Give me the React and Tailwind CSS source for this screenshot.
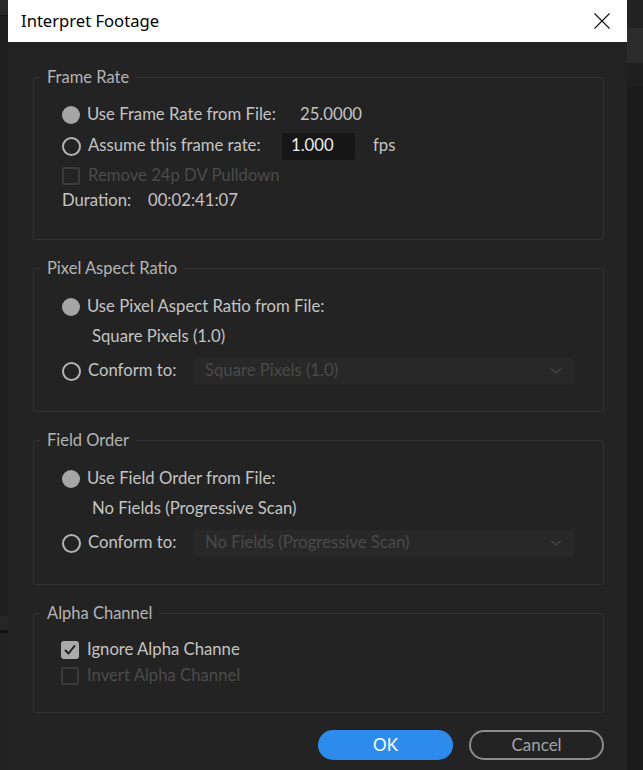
import React from "react";

const FONT = { fontFamily: "Lato, 'Noto Sans', sans-serif" };

const RadioFilled = () => (
  <span className="inline-block h-[18px] w-[18px] rounded-full bg-[#a6a6a6] shrink-0" />
);

const RadioEmpty = () => (
  <span className="inline-block h-[19px] w-[19px] rounded-full border-[2.5px] border-[#b3b3b3] shrink-0" />
);

const CheckOn = () => (
  <span className="flex h-[18px] w-[18px] items-center justify-center rounded-[3px] bg-[#a9a9a9] shrink-0">
    <svg width="14" height="14" viewBox="0 0 14 14" fill="none">
      <path d="M2.5 7.5 L5.5 10.5 L11.5 3" stroke="#1f1f1f" strokeWidth="2" strokeLinecap="round" strokeLinejoin="round" />
    </svg>
  </span>
);

const CheckOff = () => (
  <span className="inline-block h-[18px] w-[18px] rounded-[3px] border-2 border-[#3b3b3b] shrink-0" />
);

const Group = ({ title, children, className = "" }) => (
  <fieldset className={"border border-[#333333] rounded-[3px] " + className}>
    <legend className="ml-[6px] px-[7px] h-[20px] leading-[20px] text-[16.5px] text-[#b4b4b4]">{title}</legend>
    {children}
  </fieldset>
);

const Select = ({ value }) => (
  <div className="flex h-[27px] w-[381px] items-center justify-between rounded-[2px] bg-[#282828] pl-[12px] pr-[12px]">
    <span className="text-[16.7px] text-[#4a4a4a]">{value}</span>
    <svg width="12" height="8" viewBox="0 0 12 8" fill="none">
      <path d="M1 1.5 L6 6 L11 1.5" stroke="#474747" strokeWidth="1.2" />
    </svg>
  </div>
);

export default function App() {
  return (
    <div className="flex h-[770px] w-[643px] overflow-hidden bg-[#1c1c1c]" style={FONT}>
      {/* background app, left edge */}
      <div className="flex w-[8px] flex-col shrink-0">
        <div className="h-[15px] bg-[#2a2a2a]" />
        <div className="h-[1px] bg-[#161616]" />
        <div className="h-[600px] bg-[#1e1e1e]" />
        <div className="h-[14px] bg-[#262626]" />
        <div className="h-[3px] bg-[#111111]" />
        <div className="flex-1 bg-[#222222]" />
      </div>

      {/* dialog */}
      <div className="flex w-[619px] flex-col bg-[#232323] shrink-0">
        <div className="flex h-[42px] items-center justify-between bg-white pl-[13px] pr-[17px]">
          <span className="text-[16.6px] text-black" style={{ fontFamily: "'Noto Sans', sans-serif" }}>
            Interpret Footage
          </span>
          <svg width="16" height="16" viewBox="0 0 16 16" fill="none">
            <path d="M0.5 0.5 L15.5 15.5 M15.5 0.5 L0.5 15.5" stroke="#111" strokeWidth="1.1" />
          </svg>
        </div>

        <div className="flex flex-col pl-[25px] pr-[23px] pt-[25px] text-[16.7px] text-[#c3c3c3]">
          <Group title="Frame Rate">
            <div className="flex flex-col pl-[28px] pt-[13px] pb-[27px]">
              <div className="flex h-[30px] items-center">
                <RadioFilled />
                <span className="ml-[7px] w-[213px]">Use Frame Rate from File:</span>
                <span>25.0000</span>
              </div>
              <div className="flex h-[32px] items-center">
                <RadioEmpty />
                <span className="ml-[7px] w-[194px]">Assume this frame rate:</span>
                <div className="flex h-[27px] w-[73px] items-center rounded-[2px] bg-[#161616] pl-[9px] text-[#ececec]">
                  1.000
                </div>
                <span className="ml-[18px]">fps</span>
              </div>
              <div className="flex h-[28px] items-center">
                <CheckOff />
                <span className="ml-[8px] text-[#4b4b4b]">Remove 24p DV Pulldown</span>
              </div>
              <div className="flex h-[22px] items-center">
                <span className="w-[86px]">Duration:</span>
                <span>00:02:41:07</span>
              </div>
            </div>
          </Group>

          <Group title="Pixel Aspect Ratio" className="mt-[18px]">
            <div className="flex flex-col pl-[28px] pt-[14px] pb-[21px]">
              <div className="flex h-[30px] items-center">
                <RadioFilled />
                <span className="ml-[7px]">Use Pixel Aspect Ratio from File:</span>
              </div>
              <div className="flex h-[30px] items-center pl-[30px]">Square Pixels (1.0)</div>
              <div className="flex h-[38px] items-center">
                <RadioEmpty />
                <span className="ml-[7px] w-[105px]">Conform to:</span>
                <Select value="Square Pixels (1.0)" />
              </div>
            </div>
          </Group>

          <Group title="Field Order" className="mt-[18px]">
            <div className="flex flex-col pl-[28px] pt-[14px] pb-[22px]">
              <div className="flex h-[30px] items-center">
                <RadioFilled />
                <span className="ml-[7px]">Use Field Order from File:</span>
              </div>
              <div className="flex h-[30px] items-center pl-[30px]">No Fields (Progressive Scan)</div>
              <div className="flex h-[38px] items-center">
                <RadioEmpty />
                <span className="ml-[7px] w-[105px]">Conform to:</span>
                <Select value="No Fields (Progressive Scan)" />
              </div>
            </div>
          </Group>

          <Group title="Alpha Channel" className="mt-[18px]">
            <div className="flex flex-col pl-[27px] pt-[14px] pb-[23px]">
              <div className="flex h-[26px] items-center">
                <CheckOn />
                <span className="ml-[8px]">Ignore Alpha Channe</span>
              </div>
              <div className="flex h-[26px] items-center">
                <CheckOff />
                <span className="ml-[8px] text-[#4b4b4b]">Invert Alpha Channel</span>
              </div>
            </div>
          </Group>

          <div className="mt-[17px] flex justify-end gap-[16px]">
            <button className="flex h-[30px] w-[135px] items-center justify-center rounded-full bg-[#2d8ceb] text-[17px] text-white">
              OK
            </button>
            <button className="flex h-[30px] w-[135px] items-center justify-center rounded-full border-2 border-[#8c8c8c] text-[17px] text-[#a3a3a3]">
              Cancel
            </button>
          </div>
        </div>
      </div>

      {/* background app, right edge */}
      <div className="flex flex-1 flex-col">
        <div className="h-[28px] bg-[#222222]" />
        <div className="h-[35px] bg-[#2c2c2c]" />
        <div className="h-[23px] bg-[#1f1f1f]" />
        <div className="flex-1 bg-[#1b1b1b]" />
      </div>
    </div>
  );
}
